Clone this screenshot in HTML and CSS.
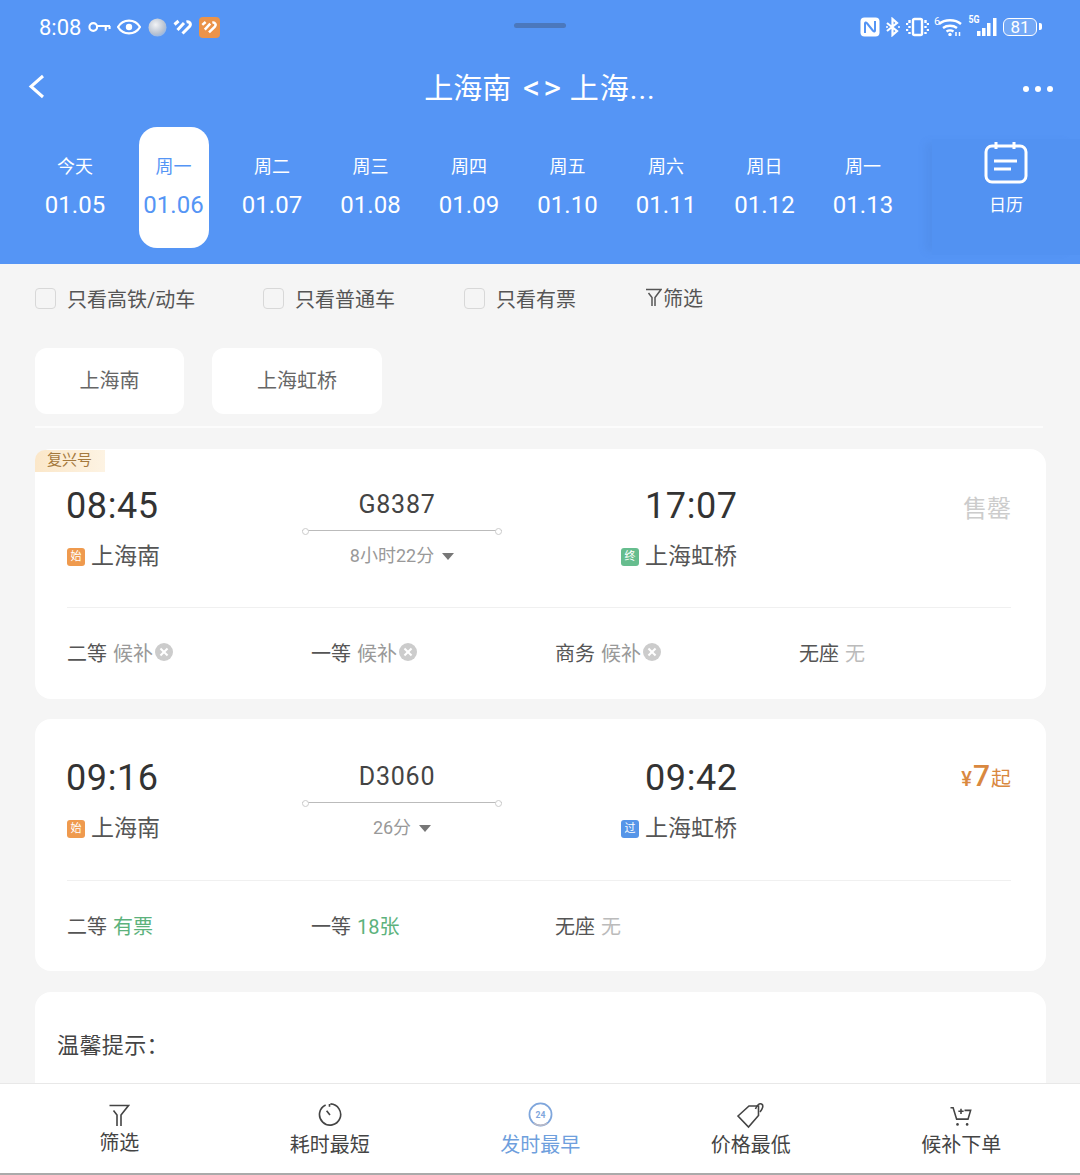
FILE: index.html
```html
<!DOCTYPE html>
<html lang="zh-CN">
<head>
    <meta charset="UTF-8">
    <meta name="viewport" content="width=device-width, initial-scale=1.0">
    <title>上海南 - 上海虹桥</title>
    <link rel="stylesheet" href="styles.css">
</head>
<body>
    <div class="page">
        <header class="top">
            <div class="status-bar">
                <div class="status-left">
                    <span class="clock">8:08</span>
                    <svg width="23" height="12" viewBox="0 0 24 12" fill="none" stroke="#fff" stroke-width="2.200"><circle cx="5.500" cy="6" r="4"/><path d="M9.500 5H23M18.500 5v5M22.500 5v3"/></svg>
                    <svg width="24" height="16" viewBox="0 0 24 16" fill="none" stroke="#fff" stroke-width="2.200"><path d="M1 8c5-8.500 17-8.500 22 0c-5 8.500-17 8.500-22 0z"/><circle cx="12" cy="8" r="3.200" fill="#fff" stroke="none"/></svg>
                    <svg width="19" height="19" viewBox="0 0 20 20"><defs><radialGradient id="ball" cx="40%" cy="35%" r="70%"><stop offset="0" stop-color="#f2f3f5"/><stop offset=".7" stop-color="#b9c3d2"/><stop offset="1" stop-color="#8fb4e8"/></radialGradient></defs><circle cx="10" cy="10" r="9.500" fill="url(#ball)"/></svg>
                    <svg width="19" height="16" viewBox="0 0 19 16" fill="none" stroke="#fff" stroke-width="3"><path d="M1.500 5.500L5.500 2M4.500 11L11 4M9.500 14.500L16.500 7.500c2-2.500 0-5.500-3-4.500"/></svg>
                    <span class="heart-box"><svg width="16" height="14" viewBox="0 0 19 16" fill="none" stroke="#fff" stroke-width="3"><path d="M1.500 5.500L5.500 2M4.500 11L11 4M9.500 14.500L16.500 7.500c2-2.500 0-5.500-3-4.500"/></svg></span>
                </div>
                <div class="status-right">
                    <svg width="20" height="20" viewBox="0 0 20 20"><rect x="0.500" y="0.500" width="19" height="19" rx="4" fill="#fff"/><path d="M5 16V6.500c0-1 1-1.300 1.600-.6L13 14M15 4v9.500c0 1-1 1.300-1.600.6L7 6" fill="none" stroke="#5595f5" stroke-width="2"/></svg>
                    <svg width="16" height="20" viewBox="0 0 16 20" fill="none" stroke="#fff" stroke-width="2.200"><path d="M2 6l10 8-4.500 4V2L12 6 2 14"/><circle cx="2" cy="10" r="1" fill="#fff" stroke="none"/><circle cx="14" cy="10" r="1" fill="#fff" stroke="none"/></svg>
                    <svg width="23" height="20" viewBox="0 0 23 20" fill="none" stroke="#fff" stroke-width="2.400"><rect x="7" y="2" width="9" height="16" rx="1.500"/><path d="M3.500 3v3M1 6v2M3.500 9v2M1 12v2M3.500 15v2M19.500 3v3M22 6v2M19.500 9v2M22 12v2M19.500 15v2"/></svg>
                    <span class="wifi"><span class="wifi-six">6</span><svg width="24" height="18" viewBox="0 0 24 18" fill="none" stroke="#fff" stroke-width="2.400"><path d="M1 6c6-5 16-5 22 0M5 10c4-3 10-3 14 0M8.500 13.500c2-1.300 5-1.300 7 0"/><circle cx="12" cy="16.500" r="1.700" fill="#fff" stroke="none"/><path d="M18 18v-4M21.500 14v4" stroke-width="1.500"/></svg></span>
                    <span class="signal"><span class="signal-5g">5G</span><svg width="22" height="20" viewBox="0 0 22 20" fill="#fff"><rect x="1" y="14" width="3.500" height="5"/><rect x="6" y="11" width="3.500" height="8"/><rect x="11" y="6" width="3.500" height="13"/><rect x="17" y="1" width="3.500" height="18"/></svg></span>
                    <span class="battery"><span class="battery-level">81</span></span>
                </div>
                <span class="handle"></span>
            </div>
            <div class="title-bar">
                <svg class="back" width="17" height="25" viewBox="0 0 17 25" fill="none" stroke="#fff" stroke-width="3"><path d="M15 2L3 12.500 15 23"/></svg>
                <h1 class="title">上海南 <span class="arrows">&lt;&gt;</span> <span class="title-end">上海...</span></h1>
                <span class="more"><i></i><i></i><i></i></span>
            </div>
            <div class="dates">
                <ul class="date-list">
                    <li class="date"><span class="day">今天</span><span class="num">01.05</span></li>
                    <li class="date active"><span class="day">周一</span><span class="num">01.06</span></li>
                    <li class="date"><span class="day">周二</span><span class="num">01.07</span></li>
                    <li class="date"><span class="day">周三</span><span class="num">01.08</span></li>
                    <li class="date"><span class="day">周四</span><span class="num">01.09</span></li>
                    <li class="date"><span class="day">周五</span><span class="num">01.10</span></li>
                    <li class="date"><span class="day">周六</span><span class="num">01.11</span></li>
                    <li class="date"><span class="day">周日</span><span class="num">01.12</span></li>
                    <li class="date"><span class="day">周一</span><span class="num">01.13</span></li>
                </ul>
                <div class="calendar">
                    <svg width="44" height="44" viewBox="0 0 44 44" fill="none" stroke="#fff" stroke-width="3"><rect x="2" y="5" width="40" height="36" rx="6"/><path d="M12 1v7M30 1v7M10 20h23M10 28h17"/></svg>
                    <span>日历</span>
                </div>
            </div>
        </header>

        <main class="content">
            <div class="filters">
                <label class="check check-a"><span class="box"></span>只看高铁/动车</label>
                <label class="check check-b"><span class="box"></span>只看普通车</label>
                <label class="check check-c"><span class="box"></span>只看有票</label>
                <span class="filter-link">
                    <svg width="17" height="19" viewBox="0 0 17 19" fill="none" stroke="#555" stroke-width="1.500"><path d="M1 1.500h15L10 9.500V18M7 18V9.500L3.500 5"/></svg>筛选
                </span>
            </div>

            <div class="stations">
                <span class="chip chip-short">上海南</span>
                <span class="chip chip-long">上海虹桥</span>
            </div>
            <div class="rule"></div>

            <section class="card card-first">
                <span class="brand">复兴号</span>
                <div class="route">
                    <div class="stop">
                        <div class="time">08:45</div>
                        <div class="station"><span class="tag orange">始</span>上海南</div>
                    </div>
                    <div class="train">
                        <div class="code">G8387</div>
                        <div class="line"></div>
                        <div class="duration">8小时22分<i class="caret"></i></div>
                    </div>
                    <div class="stop stop-end">
                        <div class="time">17:07</div>
                        <div class="station"><span class="tag green">终</span>上海虹桥</div>
                    </div>
                    <div class="sold">售罄</div>
                </div>
                <div class="seats">
                    <div class="seat">二等 <span class="muted">候补</span><i class="cross"></i></div>
                    <div class="seat">一等 <span class="muted">候补</span><i class="cross"></i></div>
                    <div class="seat">商务 <span class="muted">候补</span><i class="cross"></i></div>
                    <div class="seat">无座 <span class="faint">无</span></div>
                </div>
            </section>

            <section class="card">
                <div class="route">
                    <div class="stop">
                        <div class="time">09:16</div>
                        <div class="station"><span class="tag orange">始</span>上海南</div>
                    </div>
                    <div class="train">
                        <div class="code">D3060</div>
                        <div class="line"></div>
                        <div class="duration">26分<i class="caret"></i></div>
                    </div>
                    <div class="stop stop-end">
                        <div class="time">09:42</div>
                        <div class="station"><span class="tag blue">过</span>上海虹桥</div>
                    </div>
                    <div class="price"><small>¥</small><b>7</b><span>起</span></div>
                </div>
                <div class="seats">
                    <div class="seat">二等 <span class="ok">有票</span></div>
                    <div class="seat">一等 <span class="ok">18张</span></div>
                    <div class="seat">无座 <span class="faint">无</span></div>
                </div>
            </section>

            <section class="tips">温馨提示：</section>
        </main>

        <nav class="bottom-nav">
            <div class="nav-item nav-first">
                <svg width="22" height="23" viewBox="0 0 22 23" fill="none" stroke="#444" stroke-width="1.600"><path d="M1.500 1.500h19L13 11v11M9 22V11L5.500 6.500"/></svg>
                <span>筛选</span>
            </div>
            <div class="nav-item">
                <svg class="icon-gap" width="25" height="25" viewBox="0 0 26 26" fill="none" stroke="#444" stroke-width="1.700"><path d="M9 3a11 11 0 1 0 5-1M13 2v3M10 9l3.500 4.500"/></svg>
                <span>耗时最短</span>
            </div>
            <div class="nav-item now">
                <svg class="icon-gap" width="25" height="25" viewBox="0 0 26 26" fill="none" stroke-width="1.800"><circle cx="13" cy="13" r="11.500" stroke="#7fa6dc"/><path d="M20 22a11.500 11.500 0 0 1-14 0" stroke="#b9b9c6"/><text x="13" y="16.500" text-anchor="middle" class="now-num">24</text></svg>
                <span>发时最早</span>
            </div>
            <div class="nav-item">
                <svg class="icon-tag" width="30" height="28" viewBox="0 0 30 28" fill="none" stroke="#444" stroke-width="1.600"><path d="M2 15L13 5h9.500v9.500L12.500 26z"/><path d="M19.500 8c1-3 3.500-6 6-5 2.500 1.200 1 5-1.500 8"/></svg>
                <span>价格最低</span>
            </div>
            <div class="nav-item">
                <svg class="icon-gap" width="24" height="21" viewBox="0 0 26 24" fill="none" stroke="#444" stroke-width="1.800"><path d="M1 2h3l4 13h13l3-10h-7M10 6h6M13 3v6"/><circle cx="9" cy="21" r="1.500" fill="#444" stroke="none"/><circle cx="20" cy="21" r="1.500" fill="#444" stroke="none"/></svg>
                <span>候补下单</span>
            </div>
        </nav>
    </div>
</body>
</html>
```

FILE: styles.css
```css
* {
    box-sizing: border-box;
}

body {
    margin: 0;
    font-family: Roboto, "Noto Sans CJK SC", sans-serif;
    color: #444;
    background: #f5f5f5;
}

.page {
    display: flex;
    flex-direction: column;
    width: 1080px;
    height: 1175px;
    overflow: hidden;
}

/* header */
.top {
    height: 264px;
    flex: none;
    color: #fff;
    background: #5595f5;
}

.status-bar {
    position: relative;
    display: flex;
    justify-content: space-between;
    align-items: center;
    height: 54px;
    padding: 0 43px 0 39px;
}

.status-left,
.status-right {
    display: flex;
    align-items: center;
}

.status-left {
    gap: 6.500px;
}

.status-right {
    gap: 5px;
}

.clock {
    font-size: 22px;
}

.heart-box {
    display: flex;
    align-items: center;
    justify-content: center;
    width: 21px;
    height: 21px;
    border-radius: 4px;
    background: #eb9349;
}

.wifi,
.signal {
    position: relative;
    display: flex;
    align-items: flex-end;
}

.wifi-six {
    font-size: 11px;
    line-height: 11px;
    align-self: flex-start;
    margin-top: -2px;
    margin-right: -2px;
}

.signal-5g {
    font-size: 11px;
    line-height: 12px;
    font-weight: 700;
    align-self: flex-start;
    margin-top: -3px;
    margin-right: -5px;
    transform: scaleX(0.8);
}

.battery {
    position: relative;
    display: flex;
    align-items: center;
    justify-content: center;
    width: 34px;
    height: 18px;
    border: 1.500px solid #fff;
    border-radius: 6px;
    background: rgba(255, 255, 255, 0.18);
}

.battery::after {
    content: "";
    position: absolute;
    right: -6px;
    top: 4px;
    width: 3px;
    height: 7px;
    border-radius: 0 2px 2px 0;
    background: #fff;
}

.battery-level {
    font-size: 17px;
    line-height: 16px;
}

.handle {
    position: absolute;
    left: 514px;
    top: 23px;
    width: 52px;
    height: 5px;
    border-radius: 3px;
    background: #4b78bd;
}

.title-bar {
    display: flex;
    align-items: center;
    justify-content: space-between;
    position: relative;
    height: 69px;
    padding: 0 27px 0 28px;
}

.back {
    margin-top: -4px;
}

.title {
    position: absolute;
    left: 0;
    right: 0;
    margin: 0;
    font-size: 29px;
    font-weight: 400;
    line-height: 40px;
    text-align: center;
    word-spacing: 4.500px;
}

.arrows {
    margin-right: -6px;
    font-size: 34px;
    line-height: 30px;
    letter-spacing: 3px;
}

.title-end {
    letter-spacing: 1px;
}

.more {
    display: flex;
    gap: 6px;
}

.more i {
    width: 6px;
    height: 6px;
    border-radius: 50%;
    background: #fff;
}

.dates {
    display: flex;
    height: 141px;
}

.date-list {
    display: grid;
    grid-template-columns: repeat(9, 98.5px);
    flex: none;
    width: 906px;
    height: 121px;
    margin: 4px 0 0;
    padding: 0 0 0 26px;
    list-style: none;
}

.date {
    display: flex;
    flex-direction: column;
    align-items: center;
    justify-content: flex-start;
    width: 70px;
    height: 121px;
    margin-left: 14px;
    padding-top: 26.500px;
    border-radius: 18px;
}

.date.active {
    color: #5595f5;
    background: #fff;
}

.day {
    font-size: 18px;
    line-height: 26px;
}

.num {
    margin-top: 10px;
    font-size: 24px;
    line-height: 30px;
    white-space: nowrap;
}

.calendar {
    display: flex;
    flex-direction: column;
    align-items: center;
    flex: 1;
    height: 116px;
    margin-top: 16px;
    margin-left: 26px;
    padding-top: 2px;
    background: #5292f2;
    box-shadow: -10px 0 8px -4px rgba(60, 110, 190, 0.16);
}

.calendar span {
    margin-top: 6.500px;
    font-size: 17px;
    line-height: 26px;
}

/* filters */
.content {
    flex: 1;
    min-height: 0;
    overflow: hidden;
    padding-left: 35px;
    padding-right: 34px;
}

.filters {
    display: flex;
    align-items: center;
    height: 69px;
    font-size: 20px;
    color: #555;
}

.check {
    display: flex;
    align-items: center;
    gap: 11px;
}

.check-a {
    width: 228px;
}

.check-b {
    width: 201px;
}

.check-c {
    width: 181px;
}

.box {
    width: 21px;
    height: 21px;
    border: 1.500px solid #d8d8d8;
    border-radius: 4px;
}

.filter-link {
    display: flex;
    align-items: center;
    gap: 1px;
    margin-top: -2px;
}

.stations {
    display: flex;
    gap: 28px;
    margin-top: 15px;
}

.chip {
    display: flex;
    align-items: center;
    justify-content: center;
    height: 66px;
    padding-bottom: 4px;
    border-radius: 12px;
    font-size: 20px;
    color: #666;
    background: #fff;
}

.chip-short {
    width: 149px;
}

.chip-long {
    width: 170px;
}

.rule {
    height: 2px;
    margin-top: 12px;
    margin-right: 3px;
    background: #fcfcfc;
}

/* train cards */
.card {
    position: relative;
    margin-top: 20px;
    height: 252px;
    padding: 34px 35px 0 32px;
    border-radius: 16px;
    background: #fff;
}

.card-first {
    height: 250px;
    margin-top: 21px;
    padding-top: 32px;
}

.brand {
    position: absolute;
    left: 0;
    top: 1px;
    width: 70px;
    height: 22px;
    padding-left: 12px;
    border-radius: 10px 0 0 0;
    font-size: 15px;
    line-height: 20px;
    color: #a5793d;
    background: linear-gradient(90deg, #fbe7c9, #fdf3e3);
}

.route {
    display: grid;
    grid-template-columns: 235px 200px 1fr auto;
    height: 128px;
    border-bottom: 1px solid #f0f0f0;
}

.card-first .route {
    height: 127px;
}

.time {
    margin-top: 2px;
    margin-left: -1px;
    font-size: 36px;
    line-height: 46px;
    letter-spacing: 0.600px;
    color: #333;
}

.station {
    display: flex;
    align-items: center;
    margin-top: 10px;
    font-size: 23px;
    line-height: 36px;
    color: #555;
}

.tag {
    display: flex;
    align-items: center;
    justify-content: center;
    width: 18px;
    height: 18px;
    margin-right: 6px;
    border-radius: 3px;
    font-size: 11px;
    line-height: 18px;
    color: #fff;
}

.tag.orange {
    background: #ef9a4e;
}

.tag.green {
    background: #66bd8e;
}

.tag.blue {
    background: #5595e8;
}

.stop-end {
    padding-left: 119px;
}

.stop-end .time {
    margin-left: 24px;
}

.train {
    text-align: center;
}

.code {
    margin-left: -10px;
    font-size: 25px;
    line-height: 47px;
    color: #444;
    letter-spacing: 0.800px;
}

.line {
    position: relative;
    height: 1px;
    margin-top: 2px;
    background: #bbb;
}

.line::before,
.line::after {
    content: "";
    position: absolute;
    top: -2px;
    width: 5px;
    height: 5px;
    border: 1px solid #ccc;
    border-radius: 50%;
    background: #fff;
}

.line::before {
    left: 0;
}

.line::after {
    right: 0;
}

.duration {
    display: flex;
    align-items: center;
    justify-content: center;
    margin-top: 12px;
    font-size: 18px;
    line-height: 26px;
    color: #999;
}

.caret {
    width: 0;
    height: 0;
    margin-left: 8px;
    border-left: 6px solid transparent;
    border-right: 6px solid transparent;
    border-top: 7px solid #777;
}

.sold {
    margin-top: 5px;
    font-size: 24px;
    line-height: 46px;
    color: #ccc;
}

.price {
    display: flex;
    align-items: baseline;
    height: 46px;
    line-height: 46px;
    color: #d9883f;
}

.price small {
    font-size: 20px;
    font-weight: 500;
}

.price b {
    margin: 0 1px;
    font-size: 30px;
    font-weight: 500;
}

.price span {
    font-size: 20px;
}

.seats {
    display: grid;
    grid-template-columns: repeat(4, 244px);
    height: 88px;
    align-items: center;
    font-size: 20px;
    color: #555;
}

.seat {
    display: flex;
    align-items: center;
    gap: 6px;
}

.muted {
    color: #999;
}

.faint {
    color: #bbb;
}

.ok {
    color: #5cb27c;
}

.cross {
    position: relative;
    width: 18px;
    height: 18px;
    margin-left: -4px;
    border-radius: 50%;
    background: #ccc;
}

.cross::before,
.cross::after {
    content: "";
    position: absolute;
    left: 4px;
    top: 8px;
    width: 10px;
    height: 2px;
    background: #fff;
    transform: rotate(45deg);
}

.cross::after {
    transform: rotate(-45deg);
}

.tips {
    margin-top: 21px;
    height: 140px;
    padding: 36px 22px;
    border-radius: 16px;
    font-size: 22px;
    line-height: 36px;
    letter-spacing: 0.400px;
    color: #444;
    background: #fff;
}

/* bottom nav */
.bottom-nav {
    display: grid;
    grid-template-columns: repeat(5, 210.5px);
    flex: none;
    height: 92px;
    padding: 0 14px;
    border-top: 1px solid #e8e8e8;
    border-bottom: 2px solid #aaa;
    background: #fff;
}

.nav-item {
    display: flex;
    flex-direction: column;
    align-items: center;
    justify-content: flex-end;
    padding-bottom: 14px;
    font-size: 20px;
    line-height: 28px;
    color: #444;
}

.nav-first {
    padding-bottom: 16px;
}

.nav-first svg {
    margin-bottom: 2px;
}

.icon-gap {
    margin-bottom: 4px;
}

.icon-tag {
    margin-bottom: 2px;
}

.nav-item.now {
    color: #6f9fdd;
}

.now-num {
    font-size: 9px;
    font-weight: 700;
    fill: #7fa6dc;
}
```
